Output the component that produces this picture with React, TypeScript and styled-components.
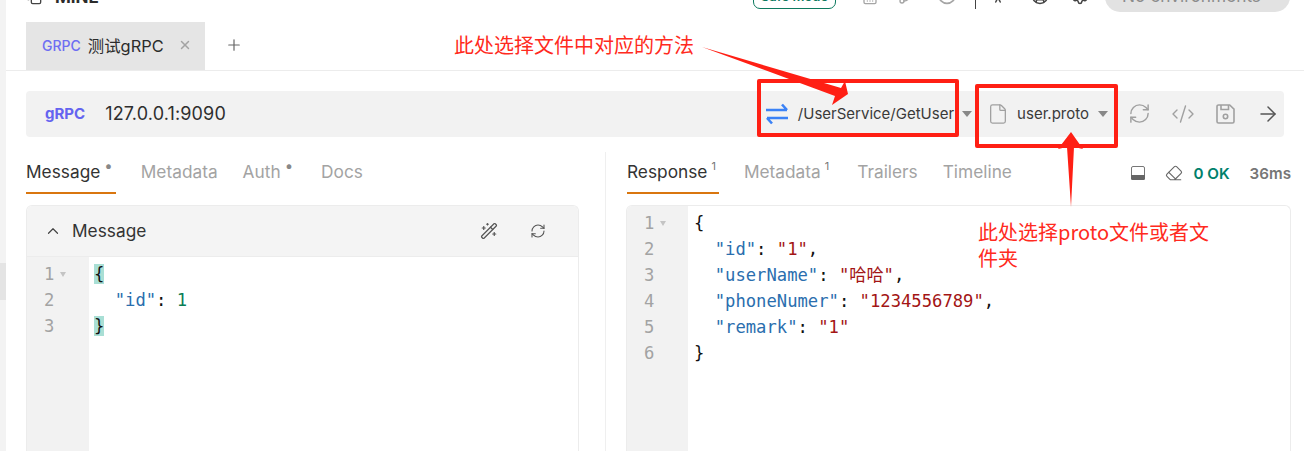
import type { ReactNode } from "react";
import styled, { createGlobalStyle } from "styled-components";
import {
  ArrowRight,
  CalendarDays,
  ChevronUp,
  CircleHelp,
  CircleUser,
  CodeXml,
  Copy,
  Eraser,
  File,
  GitBranch,
  PersonStanding,
  Plus,
  RefreshCw,
  Settings,
  WandSparkles,
  X,
} from "lucide-react";

const GlobalStyle = createGlobalStyle`
  html, body {
    margin: 0;
    padding: 0;
    background: #fff;
  }
  body {
    font-family: Inter, "Noto Sans CJK SC", sans-serif;
    color: #2b2b2b;
  }
`;

const Page = styled.div`
  position: relative;
  display: flex;
  width: 1304px;
  height: 451px;
  overflow: hidden;
  background: #fff;
`;

const SideStrip = styled.div`
  flex: 0 0 6px;
  display: flex;
  flex-direction: column;
  background: #f3f3f3;
`;

const SideMark = styled.div`
  width: 100%;
  height: 37px;
  margin-top: 263px;
  background: #e4e4e4;
`;

const Main = styled.div`
  flex: 1;
  min-width: 0;
  display: flex;
  flex-direction: column;
`;

const TopBar = styled.div`
  flex: 0 0 12px;
  height: 12px;
  overflow: hidden;
  display: flex;
  align-items: flex-end;
  padding-left: 20px;
`;

const ProjectName = styled.span`
  margin-left: 13px;
  margin-bottom: 5px;
  font-size: 17px;
  font-weight: 700;
  line-height: 20px;
`;

const TopRight = styled.div`
  margin-left: auto;
  display: flex;
  align-items: flex-end;
  padding-right: 14px;
`;

const SafePill = styled.div`
  width: 83px;
  height: 26px;
  box-sizing: border-box;
  margin-bottom: 3px;
  padding-top: 1px;
  border: 1px solid #0d7a5f;
  border-radius: 7px;
  color: #0d7a5f;
  font-size: 13px;
  font-weight: 600;
  text-align: center;
  line-height: 22px;
`;

const TopIcon = styled.div<{ $left: number; $color?: string }>`
  margin-left: ${({ $left }) => $left}px;
  margin-bottom: 7px;
  display: flex;
  color: ${({ $color }) => $color ?? "#a5a5a5"};
`;

const TopDivider = styled.div`
  width: 1px;
  height: 12px;
  margin: 0 0 3px 18px;
  background: #444;
`;

const EnvPill = styled.div`
  width: 185px;
  height: 30px;
  box-sizing: border-box;
  margin-left: 16px;
  padding: 3px 0 0 17px;
  border-radius: 15px;
  background: #e2e2e2;
  color: #8c8c8c;
  font-size: 17.3px;
  line-height: 22px;
`;

const TabBar = styled.div`
  flex: 0 0 48px;
  display: flex;
  align-items: stretch;
  margin-top: 10px;
  padding-left: 20px;
  border-bottom: 1px solid #ececec;
`;

const Tab = styled.div`
  width: 179px;
  box-sizing: border-box;
  display: flex;
  align-items: center;
  padding: 0 0 2px 16px;
  background: #e5e5e5;
  font-size: 16.4px;
`;

const TabMethod = styled.span`
  color: #6e6ef2;
  font-size: 14px;
  font-weight: 500;
  margin-right: 7px;
`;

const TabClose = styled.span`
  display: flex;
  margin-left: 14px;
  color: #a3a3a3;
`;

const AddTab = styled.div`
  display: flex;
  align-items: center;
  margin-left: 20px;
  padding-bottom: 2px;
  color: #666;
`;

const UrlBar = styled.div`
  flex: 0 0 46px;
  box-sizing: border-box;
  display: flex;
  align-items: center;
  margin: 20px 20px 0 20px;
  padding-bottom: 1px;
  border-radius: 4px;
  background: #f2f2f2;
`;

const UrlMethod = styled.span`
  margin-left: 19px;
  color: #6464f0;
  font-size: 15px;
  font-weight: 700;
`;

const UrlText = styled.span`
  margin-left: 20px;
  color: #2e2e2e;
  font-size: 18px;
  letter-spacing: 0.15px;
`;

const UrlActions = styled.div`
  margin-left: auto;
  display: flex;
  align-items: center;
`;

const SelectText = styled.span<{ $left: number }>`
  margin-left: ${({ $left }) => $left}px;
  color: #3a3a3a;
  font-size: 15px;
`;

const Caret = styled.span<{ $left: number }>`
  width: 0;
  height: 0;
  margin-left: ${({ $left }) => $left}px;
  border-left: 5.5px solid transparent;
  border-right: 5.5px solid transparent;
  border-top: 6px solid #888;
`;

const ActionIcon = styled.div<{ $left: number; $color?: string }>`
  display: flex;
  margin-left: ${({ $left }) => $left}px;
  color: ${({ $color }) => $color ?? "#a0a0a0"};
`;

const Panes = styled.div`
  flex: 1;
  min-height: 0;
  display: flex;
  margin: 15px 13px 0 20px;
`;

const LeftPane = styled.div`
  flex: 0 0 580px;
  box-sizing: border-box;
  display: flex;
  flex-direction: column;
  padding-right: 26px;
  border-right: 1px solid #efefef;
`;

const RightPane = styled.div`
  flex: 1;
  min-width: 0;
  display: flex;
  flex-direction: column;
  padding-left: 20px;
`;

const PaneHead = styled.div<{ $indent?: number }>`
  flex: 0 0 42px;
  display: flex;
  align-items: stretch;
  gap: 25px;
  padding-left: ${({ $indent }) => $indent ?? 0}px;
`;

const PaneTab = styled.div<{ $active?: boolean }>`
  display: flex;
  align-items: flex-start;
  box-sizing: border-box;
  height: 42px;
  padding-top: 8px;
  border-bottom: 2px solid ${({ $active }) => ($active ? "#d9760f" : "transparent")};
  color: ${({ $active }) => ($active ? "#333" : "#a3a3a3")};
  font-size: 17.3px;
  line-height: 24px;
`;

const Mark = styled.span<{ $dot?: boolean }>`
  margin-left: 4px;
  margin-right: 3px;
  margin-top: -3px;
  color: ${({ $dot }) => ($dot ? "#888" : "#777")};
  font-size: ${({ $dot }) => ($dot ? "15px" : "11px")};
  line-height: 18px;
`;

const Status = styled.div`
  margin-left: auto;
  display: flex;
  align-items: center;
  height: 42px;
  font-size: 15.2px;
  font-weight: 600;
`;

const StatusIcon = styled.div<{ $left: number }>`
  display: flex;
  margin-left: ${({ $left }) => $left}px;
  color: #666;
`;

const StatusCode = styled.span`
  margin-left: 10px;
  color: #00806b;
`;

const StatusTime = styled.span`
  margin-left: 20px;
  color: #767676;
`;

const EditorCard = styled.div`
  flex: 1;
  margin-top: 11px;
  display: flex;
  flex-direction: column;
  border: 1px solid #ececec;
  border-bottom: 0;
  border-radius: 6px 6px 0 0;
  overflow: hidden;
`;

const CardHead = styled.div`
  flex: 0 0 50px;
  display: flex;
  align-items: center;
  padding: 0 32px 0 17px;
  border-bottom: 1px solid #ececec;
  background: #f4f4f4;
`;

const CardTitle = styled.span`
  margin: -2px 0 0 10px;
  color: #333;
  font-size: 17.3px;
`;

const CardIcon = styled.div<{ $left?: number; $auto?: boolean }>`
  display: flex;
  margin-left: ${({ $auto, $left }) => ($auto ? "auto" : `${$left ?? 0}px`)};
  color: #555;
`;

const Editor = styled.div`
  flex: 1;
  display: flex;
  font-family: "DejaVu Sans Mono", "Noto Sans CJK SC", monospace;
  font-size: 17.2px;
  line-height: 26px;
`;

const Gutter = styled.div<{ $width: number }>`
  flex: 0 0 ${({ $width }) => $width}px;
  box-sizing: border-box;
  padding: 4px 0 0 17px;
  background: #f2f2f2;
  color: #a3a3a3;
`;

const LineNo = styled.div`
  display: flex;
  align-items: center;
  height: 26px;
`;

const FoldCaret = styled.span`
  width: 0;
  height: 0;
  margin-left: 6px;
  border-left: 3.5px solid transparent;
  border-right: 3.5px solid transparent;
  border-top: 5px solid #c4c4c4;
`;

const Code = styled.div<{ $pad: number }>`
  flex: 1;
  padding: 4px 0 0 ${({ $pad }) => $pad}px;
  color: #111;
`;

const Line = styled.div`
  height: 26px;
  white-space: pre;
`;

const Bracket = styled.span<{ $match?: boolean }>`
  background: ${({ $match }) => ($match ? "#a9dfd5" : "transparent")};
`;

const Key = styled.span`
  color: #2a6eae;
`;

const Str = styled.span`
  color: #a31515;
`;

const Num = styled.span`
  color: #0a7d55;
`;

// red notes pasted on top of the screenshot
const NoteText = styled.div<{ $x: number; $y: number; $w: number }>`
  position: absolute;
  left: ${({ $x }) => $x}px;
  top: ${({ $y }) => $y}px;
  width: ${({ $w }) => $w}px;
  color: #ff2a20;
  font-family: "Noto Sans CJK SC", sans-serif;
  font-size: 20px;
  line-height: 26px;
`;

const NoteBox = styled.div<{ $x: number; $y: number; $w: number; $h: number }>`
  position: absolute;
  left: ${({ $x }) => $x}px;
  top: ${({ $y }) => $y}px;
  width: ${({ $w }) => $w}px;
  height: ${({ $h }) => $h}px;
  box-sizing: border-box;
  border: 4px solid #ff1f14;
  border-radius: 2px;
`;

const NoteArrows = styled.svg`
  position: absolute;
  left: 0;
  top: 0;
  pointer-events: none;
`;

const SwapIcon = () => (
  <svg width="24" height="24" viewBox="0 0 24 24" fill="none" stroke="#3b82f6" strokeWidth="2.6">
    <path d="M1 8h21M17 2.500l5 5.500" />
    <path d="M23 16H2M7 21.500L2 16" />
  </svg>
);

const SaveIcon = () => (
  <svg width="22" height="22" viewBox="0 0 22 22" fill="none" stroke="currentColor" strokeWidth="1.6">
    <path d="M3 3.500A1.500 1.500 0 0 1 4.500 2h11.200L20 6.200v12.300a1.500 1.500 0 0 1-1.500 1.500h-14A1.500 1.500 0 0 1 3 18.500z" />
    <path d="M7 2v4.500h7.500V2" />
    <circle cx="11.500" cy="13.500" r="2.200" />
  </svg>
);

const PanelIcon = () => (
  <svg width="16" height="16" viewBox="0 0 16 16">
    <rect x="1.500" y="1.500" width="13" height="13" rx="1.500" fill="none" stroke="#777" />
    <path d="M1 10h14v3.500a1.500 1.500 0 0 1-1.500 1.500h-11A1.500 1.500 0 0 1 1 13.500z" fill="#666" />
  </svg>
);

const requestLines = [
  <Line key="a"><Bracket $match>{"{"}</Bracket></Line>,
  <Line key="b">{"  "}<Key>"id"</Key>: <Num>1</Num></Line>,
  <Line key="c"><Bracket $match>{"}"}</Bracket></Line>,
];

const responseLines = [
  <Line key="a">{"{"}</Line>,
  <Line key="b">{"  "}<Key>"id"</Key>: <Str>"1"</Str>,</Line>,
  <Line key="c">{"  "}<Key>"userName"</Key>: <Str>"哈哈"</Str>,</Line>,
  <Line key="d">{"  "}<Key>"phoneNumer"</Key>: <Str>"1234556789"</Str>,</Line>,
  <Line key="e">{"  "}<Key>"remark"</Key>: <Str>"1"</Str></Line>,
  <Line key="f">{"}"}</Line>,
];

const CodeView = ({ lines, gutter, pad }: { lines: ReactNode[]; gutter: number; pad: number }) => (
  <Editor>
    <Gutter $width={gutter}>
      {lines.map((_, i) => (
        <LineNo key={i}>
          {i + 1}
          {i === 0 && <FoldCaret />}
        </LineNo>
      ))}
    </Gutter>
    <Code $pad={pad}>{lines}</Code>
  </Editor>
);

export default function App() {
  return (
    <Page>
      <GlobalStyle />
      <SideStrip>
        <SideMark />
      </SideStrip>
      <Main>
        <TopBar>
          <TopIcon $left={0} $color="#444">
            <Copy size={16} />
          </TopIcon>
          <ProjectName>MINE</ProjectName>
          <TopRight>
            <SafePill>Safe Mode</SafePill>
            <TopIcon $left={26}>
              <CalendarDays size={16} />
            </TopIcon>
            <TopIcon $left={20}>
              <GitBranch size={16} />
            </TopIcon>
            <TopIcon $left={23}>
              <CircleHelp size={20} />
            </TopIcon>
            <TopDivider />
            <TopIcon $left={13} $color="#444">
              <PersonStanding size={18} />
            </TopIcon>
            <TopIcon $left={24} $color="#444">
              <CircleUser size={18} />
            </TopIcon>
            <TopIcon $left={22} $color="#444">
              <Settings size={18} />
            </TopIcon>
            <EnvPill>No environments</EnvPill>
          </TopRight>
        </TopBar>

        <TabBar>
          <Tab>
            <TabMethod>GRPC</TabMethod>
            测试gRPC
            <TabClose>
              <X size={14} strokeWidth={2.5} />
            </TabClose>
          </Tab>
          <AddTab>
            <Plus size={18} strokeWidth={1.6} />
          </AddTab>
        </TabBar>

        <UrlBar>
          <UrlMethod>gRPC</UrlMethod>
          <UrlText>127.0.0.1:9090</UrlText>
          <UrlActions>
            <SwapIcon />
            <SelectText $left={9}>/UserService/GetUser</SelectText>
            <Caret $left={8} />
            <ActionIcon $left={15}>
              <File size={22} strokeWidth={1.4} />
            </ActionIcon>
            <SelectText $left={8}>user.proto</SelectText>
            <Caret $left={9} />
            <ActionIcon $left={20}>
              <RefreshCw size={23} strokeWidth={1.5} />
            </ActionIcon>
            <ActionIcon $left={20}>
              <CodeXml size={24} strokeWidth={1.4} />
            </ActionIcon>
            <ActionIcon $left={19}>
              <SaveIcon />
            </ActionIcon>
            <ActionIcon $left={20} $color="#555">
              <ArrowRight size={24} strokeWidth={1.5} />
            </ActionIcon>
            <ActionIcon $left={4} />
          </UrlActions>
        </UrlBar>

        <Panes>
          <LeftPane>
            <PaneHead>
              <PaneTab $active>
                Message<Mark $dot>•</Mark>
              </PaneTab>
              <PaneTab>Metadata</PaneTab>
              <PaneTab>
                Auth<Mark $dot>•</Mark>
              </PaneTab>
              <PaneTab>Docs</PaneTab>
            </PaneHead>
            <EditorCard>
              <CardHead>
                <ChevronUp size={18} color="#444" strokeWidth={1.6} />
                <CardTitle>Message</CardTitle>
                <CardIcon $auto>
                  <WandSparkles size={18} strokeWidth={1.6} />
                </CardIcon>
                <CardIcon $left={32}>
                  <RefreshCw size={16} strokeWidth={1.6} />
                </CardIcon>
              </CardHead>
              <CodeView lines={requestLines} gutter={62} pad={5} />
            </EditorCard>
          </LeftPane>
          <RightPane>
            <PaneHead $indent={1}>
              <PaneTab $active>
                Response<Mark>1</Mark>
              </PaneTab>
              <PaneTab>
                Metadata<Mark>1</Mark>
              </PaneTab>
              <PaneTab>Trailers</PaneTab>
              <PaneTab>Timeline</PaneTab>
              <Status>
                <StatusIcon $left={0}>
                  <PanelIcon />
                </StatusIcon>
                <StatusIcon $left={19}>
                  <Eraser size={18} strokeWidth={1.5} />
                </StatusIcon>
                <StatusCode>0 OK</StatusCode>
                <StatusTime>36ms</StatusTime>
              </Status>
            </PaneHead>
            <EditorCard>
              <CodeView lines={responseLines} gutter={61} pad={6} />
            </EditorCard>
          </RightPane>
        </Panes>
      </Main>

      <NoteBox $x={757} $y={79} $w={202} $h={58} />
      <NoteBox $x={975} $y={84} $w={143} $h={64} />
      <NoteArrows width="1304" height="451" viewBox="0 0 1304 451">
        <path d="M702 47 L841 88 L845 81 L848 94 L832 105 L835 96 Z" fill="#ff1f14" />
        <path d="M1071 132 L1083 149 L1074 147 L1071 207 L1067 147 L1058 149 Z" fill="#ff1f14" />
      </NoteArrows>
      <NoteText $x={454} $y={32} $w={260}>
        此处选择文件中对应的方法
      </NoteText>
      <NoteText $x={978} $y={219} $w={240}>
        此处选择proto文件或者文件夹
      </NoteText>
    </Page>
  );
}
